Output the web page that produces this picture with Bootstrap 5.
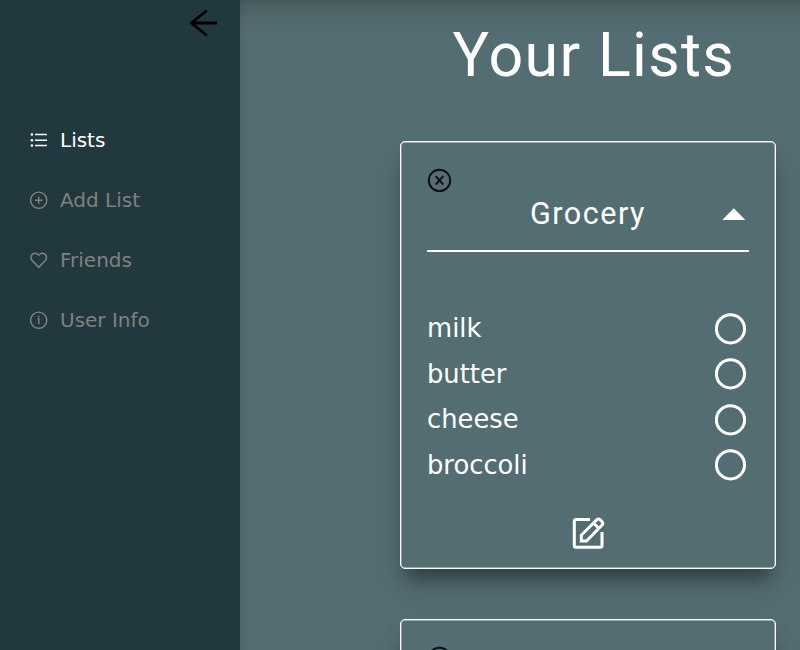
<!DOCTYPE html>
<html lang="en">
<head>
<meta charset="utf-8">
<meta name="viewport" content="width=device-width, initial-scale=1">
<title>Your Lists</title>
<link href="https://cdn.jsdelivr.net/npm/bootstrap@5.3.0/dist/css/bootstrap.min.css" rel="stylesheet">
<style>
body { background: #546d72; font-family: "DejaVu Sans", sans-serif; }
.side-panel { width: 239.5px; background: #21383e; }
.side-panel .nav { gap: 30px; padding: 3px 0 0 30px; }
.side-panel .nav-link { color: #808080; font-size: 20px; line-height: 30px; gap: 12px; }
.side-panel .nav-link.active { color: #fff; }
.back-row { height: 122px; padding: 6px 19.5px 0 0; }
.lists-page { padding-left: 136.5px; background: linear-gradient(rgba(50,50,50,.36), rgba(50,50,50,.2) 8px, rgba(50,50,50,.07) 20px, transparent 38px), linear-gradient(90deg, rgba(40,60,60,.12), transparent 8px); }
.lists-inner { width: 424px; padding: 0 24px; }
.page-title { font: 400 61px/72px Roboto, sans-serif; letter-spacing: 1.3px; margin: 19px 0 50px 11.5px; white-space: nowrap; }
.list-card { height: 428px; margin-bottom: 49.5px; padding: 25px 26px 0; border: 1.25px solid #fff; border-radius: 5px; background: #546d72; box-shadow: inset 0 0 0 .4px rgba(255,255,255,.8), 0 19px 38px rgba(0,0,0,.05), 0 15px 18px -5px rgba(0,0,0,.4); }
.list-head { height: 59px; border-bottom: 2.4px solid #fff; }
.list-name { font: 400 30.5px/38px Roboto, sans-serif; letter-spacing: 1.5px; padding-top: 2px; }
.items { margin-top: 54px; font-size: 25.8px; }
.item-row { height: 45.5px; }
svg { display: block; flex: none; }
</style>
<script src="https://cdn.jsdelivr.net/npm/bootstrap@5.3.0/dist/js/bootstrap.bundle.min.js"></script>
</head>
<body class="d-flex overflow-hidden vh-100">
<aside class="side-panel flex-shrink-0">
  <div class="back-row d-flex justify-content-end align-items-start">
    <svg width="34" height="34" viewBox="0 0 34 34" fill="none" stroke="#000" stroke-width="2.8"><path d="M31 17H5.500M20.800 4.500L5.500 17L20.800 29.500"/></svg>
  </div>
  <nav class="nav flex-column">
    <a class="nav-link active p-0 d-flex align-items-center" href="#"><svg width="18" height="18" viewBox="0 0 18 18" fill="none" stroke="currentColor" stroke-width="1.4"><path d="M5 3.500H17M5 9.200H17M5 14.500H17"/><g fill="currentColor" stroke="none"><circle cx="1.900" cy="3.500" r="1.300"/><circle cx="1.900" cy="9.200" r="1.300"/><circle cx="1.900" cy="14.500" r="1.300"/></g></svg>Lists</a>
    <a class="nav-link p-0 d-flex align-items-center" href="#"><svg width="18" height="18" viewBox="0 0 18 18" fill="none" stroke="currentColor" stroke-width="1.4"><circle cx="8.700" cy="9.200" r="8.100"/><path d="M8.700 5.400V13M4.900 9.200H12.500"/></svg>Add List</a>
    <a class="nav-link p-0 d-flex align-items-center" href="#"><svg width="18" height="18" viewBox="0 0 18 18" fill="none" stroke="currentColor" stroke-width="1.500"><path d="M8.700 4.200C7 1.500 3.300 1.500 1.700 4C.4 6.100 1 8.300 2.600 10L8.700 16.300L14.800 10C16.400 8.300 17 6.100 15.700 4C14.100 1.500 10.400 1.500 8.700 4.200Z"/></svg>Friends</a>
    <a class="nav-link p-0 d-flex align-items-center" href="#"><svg width="18" height="18" viewBox="0 0 18 18" fill="none" stroke="currentColor" stroke-width="1.4"><circle cx="8.700" cy="9.200" r="8.100"/><path d="M7.500 7.900H8.900V13"/><circle cx="8.700" cy="5.600" r=".9" fill="currentColor" stroke="none"/></svg>User Info</a>
  </nav>
</aside>
<main class="lists-page flex-grow-1 text-white overflow-hidden">
  <div class="lists-inner">
    <h1 class="page-title text-center">Your Lists</h1>
    <section class="list-card">
      <svg width="26" height="26" viewBox="0 0 26 26" fill="none" stroke="#0a0f10" stroke-width="1.9"><circle cx="12.500" cy="13.400" r="10.700"/><path d="M8.700 9.200L16.300 17.600M16.300 9.200L8.700 17.600"/></svg>
      <div class="list-head d-flex justify-content-between">
        <svg width="28" height="1"></svg>
        <div class="list-name">Grocery</div>
        <svg width="28" height="38" viewBox="0 0 28 38" fill="#fff"><path d="M1.300 27L12.800 15.200L24.300 27Z"/></svg>
      </div>
      <div class="items">
        <div class="item-row d-flex justify-content-between align-items-center"><span>milk</span><svg width="34" height="34" viewBox="0 0 34 34" fill="none" stroke="#fff" stroke-width="3"><circle cx="15.500" cy="16.800" r="14.100"/></svg></div>
        <div class="item-row d-flex justify-content-between align-items-center"><span>butter</span><svg width="34" height="34" viewBox="0 0 34 34" fill="none" stroke="#fff" stroke-width="3"><circle cx="15.500" cy="16.800" r="14.100"/></svg></div>
        <div class="item-row d-flex justify-content-between align-items-center"><span>cheese</span><svg width="34" height="34" viewBox="0 0 34 34" fill="none" stroke="#fff" stroke-width="3"><circle cx="15.500" cy="16.800" r="14.100"/></svg></div>
        <div class="item-row d-flex justify-content-between align-items-center"><span>broccoli</span><svg width="34" height="34" viewBox="0 0 34 34" fill="none" stroke="#fff" stroke-width="3"><circle cx="15.500" cy="16.800" r="14.100"/></svg></div>
      </div>
      <div class="d-flex justify-content-center pt-4">
        <svg width="34" height="38" viewBox="0 0 34 38" fill="none" stroke="#fff" stroke-width="3"><path d="M19 7.600H5Q3.300 7.600 3.300 9.300V33.500Q3.300 35.200 5 35.200H29.300Q31 35.200 31 33.500V20"/><path d="M10.300 29V23.300L25.800 7.700Q27.500 6.300 29 7.700L31.100 9.800Q32.500 11.400 31.100 13L15.500 29ZM22.500 11L27.800 16.300"/></svg>
      </div>
    </section>
    <section class="list-card">
      <svg width="26" height="26" viewBox="0 0 26 26" fill="none" stroke="#0a0f10" stroke-width="1.9"><circle cx="12.500" cy="13.400" r="10.700"/><path d="M8.700 9.200L16.300 17.600M16.300 9.200L8.700 17.600"/></svg>
    </section>
  </div>
</main>
</body>
</html>
